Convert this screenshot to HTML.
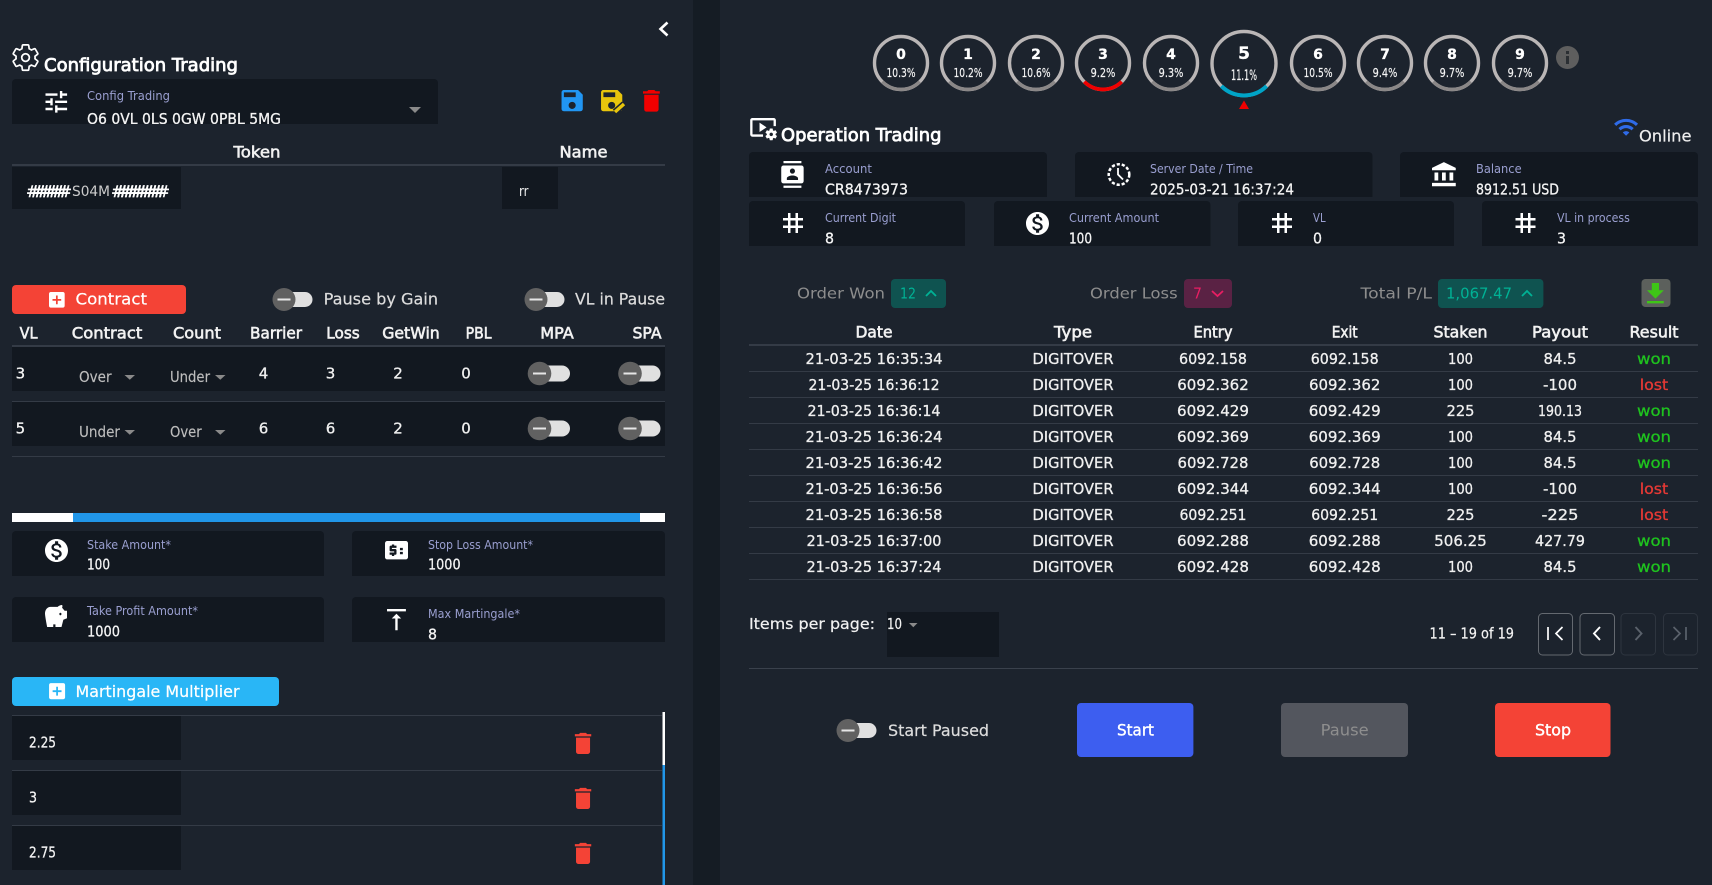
<!DOCTYPE html>
<html lang="en"><head><meta charset="utf-8"><title>Trading</title>
<style>
html,body{margin:0;padding:0;background:#1c232d;overflow:hidden}
svg{display:block}
text{font-family:"DejaVu Sans","Liberation Sans",sans-serif;fill:#e8e8e8;font-size:14px}
.h{font-size:18px;fill:#fff;stroke:#fff;stroke-width:.8}
.th{font-size:16px;fill:#f2f2f2;stroke:#f2f2f2;stroke-width:.6;text-anchor:middle}
.l{font-size:12px;fill:#9a9fd0}
.v{font-size:15px;fill:#f4f4f4;stroke:#f4f4f4;stroke-width:.3}
.s{font-size:15px;fill:#bdbdbd;stroke:#bdbdbd;stroke-width:.15}
.c{font-size:15px;fill:#f0f0f0;stroke:#f0f0f0;stroke-width:.3;text-anchor:middle}
.g{fill:#1fc21f;stroke:#1fc21f}.r{fill:#e53935;stroke:#e53935}
.n{font-size:14px;font-weight:bold;fill:#fff;stroke:#fff;stroke-width:.3;text-anchor:middle}
.p{font-size:12.5px;fill:#f4f4f4;stroke:#f4f4f4;stroke-width:.2;text-anchor:middle}
.o{font-size:15px;fill:#8d8d8d}
.b{font-size:16px;fill:#fff;text-anchor:middle;stroke:#fff;stroke-width:.4}
.t{font-size:16px;fill:#ddd;stroke:#ddd;stroke-width:.2}
.w{fill:#fff}
</style></head><body>
<svg xmlns="http://www.w3.org/2000/svg" width="1712" height="885" viewBox="0 0 1712 885">
<defs>
<g id="tog"><rect x="-8" y="-7.5" width="36.5" height="15" rx="7.5" fill="#e0e0e0"/><circle r="11.5" fill="#616161"/><rect x="-6.5" y="-1" width="13" height="2" fill="#e6e6e6"/></g>
<g id="tog2"><rect x="-8" y="-8" width="38.5" height="16" rx="8" fill="#e0e0e0"/><circle r="11.8" fill="#616161"/><rect x="-6.5" y="-1" width="13" height="2" fill="#e6e6e6"/></g>
<g id="ring"><circle r="26.5" fill="none" stroke="#bab6b6" stroke-width="3.4"/><path d="M-18.7 18.7A26.5 26.5 0 0 0 18.7 18.7" fill="none" stroke="#8a8787" stroke-width="3.4"/></g>
<path id="del" d="M6 19c0 1.1.9 2 2 2h8c1.1 0 2-.9 2-2V7H6v12zM19 4h-3.5l-1-1h-5l-1 1H5v2h14V4z"/>
<path id="tag" d="M20 10V8h-4V4h-2v4h-4V4H8v4H4v2h4v4H4v2h4v4h2v-4h4v4h2v-4h4v-2h-4v-4h4zm-6 4h-4v-4h4v4z"/>
<path id="add" d="M19 3H5c-1.11 0-2 .9-2 2v14c0 1.1.89 2 2 2h14c1.1 0 2-.9 2-2V5c0-1.1-.9-2-2-2zm-2 10h-4v4h-2v-4H7v-2h4V7h2v4h4v2z"/>
<path id="mon" d="M12 2C6.48 2 2 6.48 2 12s4.48 10 10 10 10-4.48 10-10S17.52 2 12 2zm1.41 16.09V20h-2.67v-1.93c-1.71-.36-3.16-1.46-3.27-3.4h1.96c.1 1.05.82 1.87 2.65 1.87 1.96 0 2.4-.98 2.4-1.59 0-.83-.44-1.61-2.67-2.14-2.48-.6-4.18-1.62-4.18-3.67 0-1.72 1.39-2.84 3.11-3.21V4h2.67v1.95c1.86.45 2.79 1.86 2.85 3.39H14.3c-.05-1.11-.64-1.87-2.22-1.87-1.5 0-2.4.68-2.4 1.64 0 .84.65 1.39 2.67 1.91s4.18 1.39 4.18 3.91c-.01 1.83-1.38 2.83-3.12 3.16z"/>
<path id="sav" d="M17 3H5c-1.11 0-2 .9-2 2v14c0 1.1.89 2 2 2h14c1.1 0 2-.9 2-2V7l-4-4zm-5 16c-1.66 0-3-1.34-3-3s1.34-3 3-3 3 1.34 3 3-1.34 3-3 3zm3-10H5V5h10v4z" fill-rule="evenodd"/>
</defs>

<rect width="1712" height="885" fill="#1c232d"/>
<rect x="693" width="27" height="885" fill="#151c24"/>

<!-- chevron -->
<path d="M667.5 22.5l-7 6.500 7 6.500" fill="none" stroke="#fff" stroke-width="2.600"/>

<!-- config header -->
<g transform="translate(10.3 42.300) scale(1.27)" fill="none" stroke="#fff" stroke-width="1.350"><path d="M19.43 12.98c.04-.32.07-.64.07-.98 0-.34-.03-.66-.07-.98l2.11-1.65c.19-.15.24-.42.12-.64l-2-3.46c-.09-.16-.26-.25-.44-.25-.06 0-.12.01-.17.03l-2.49 1c-.52-.4-1.08-.73-1.69-.98l-.38-2.65C14.46 2.18 14.25 2 14 2h-4c-.25 0-.46.18-.49.42l-.38 2.65c-.61.25-1.17.59-1.69.98l-2.49-1c-.06-.02-.12-.03-.18-.03-.17 0-.34.09-.43.25l-2 3.46c-.13.22-.07.49.12.64l2.11 1.65c-.04.32-.07.65-.07.98 0 .33.03.66.07.98l-2.11 1.65c-.19.15-.24.42-.12.64l2 3.46c.09.16.26.25.44.25.06 0 .12-.01.17-.03l2.49-1c.52.4 1.08.73 1.69.98l.38 2.65c.03.24.24.42.49.42h4c.25 0 .46-.18.49-.42l.38-2.65c.61-.25 1.17-.59 1.69-.98l2.49 1c.06.02.12.03.18.03.17 0 .34-.09.43-.25l2-3.46c.12-.22.07-.49-.12-.64l-2.11-1.65z"/><circle cx="12" cy="12" r="3"/></g>
<text class="h" x="44" y="71" textLength="194" lengthAdjust="spacingAndGlyphs">Configuration Trading</text>

<!-- config select -->
<path d="M12 83a4 4 0 0 1 4-4h418a4 4 0 0 1 4 4v41H12z" fill="#121820"/>
<path class="w" transform="translate(41.9 87.4) scale(1.2)" d="M3 17v2h6v-2H3zM3 5v2h10V5H3zm10 16v-2h8v-2h-8v-2h-2v6h2zM7 9v2H3v2h4v2h2V9H7zm14 4v-2H11v2h10zm-6-4h2V7h4V5h-4V3h-2v6z"/>
<text class="l" x="87" y="100" textLength="83" lengthAdjust="spacingAndGlyphs">Config Trading</text>
<text class="v" x="87" y="124" textLength="194" lengthAdjust="spacingAndGlyphs">O6 0VL 0LS 0GW 0PBL 5MG</text>
<rect x="12" y="124" width="426" height="5" fill="#1c232d"/>
<path d="M409 107h12l-6 6z" fill="#8a8a8a"/>

<use href="#sav" fill="#2196f3" transform="translate(558 86.5) scale(1.18)"/>
<use href="#sav" fill="#e8c50c" transform="translate(597.5 86.5) scale(1.18)"/>
<path d="M615 112l9-8" stroke="#1c232d" stroke-width="6.5"/>
<path d="M615 112l9-8" stroke="#e8c50c" stroke-width="3.4"/>
<use href="#del" fill="#f20000" transform="translate(637 86.4) scale(1.2)"/>

<!-- token -->
<text class="th" x="257" y="157.5" textLength="47" lengthAdjust="spacingAndGlyphs">Token</text>
<text class="th" x="583.5" y="157.5" textLength="48" lengthAdjust="spacingAndGlyphs">Name</text>
<rect x="12" y="164" width="653" height="2" fill="#343b46"/>
<rect x="12" y="167" width="169" height="42" fill="#121820"/>
<rect x="502" y="167" width="56" height="42" fill="#121820"/>
<text x="26" y="197" style="font-size:16px;fill:#fff;stroke:#fff;stroke-width:.4" textLength="46" lengthAdjust="spacing">##########</text>
<text x="72" y="196" style="font-size:14px;fill:#ccc" textLength="38" lengthAdjust="spacingAndGlyphs">S04M</text>
<text x="111" y="197" style="font-size:16px;fill:#fff;stroke:#fff;stroke-width:.4" textLength="59" lengthAdjust="spacing">#############</text>
<text x="519" y="196" style="font-size:14px;fill:#eee" textLength="9.5" lengthAdjust="spacingAndGlyphs">rr</text>

<!-- contract row -->
<rect x="12" y="285" width="174" height="29" rx="4" fill="#f44336"/>
<use href="#add" fill="#fff" transform="translate(46.4 289.4) scale(.87)"/>
<text class="t" x="75.5" y="304.5" textLength="71.5" lengthAdjust="spacingAndGlyphs" style="fill:#fff;stroke:#fff">Contract</text>
<use href="#tog" x="284" y="299.5"/>
<text class="t" x="323.6" y="304.5" textLength="114.5" lengthAdjust="spacingAndGlyphs">Pause by Gain</text>
<use href="#tog" x="536" y="299.5"/>
<text class="t" x="575" y="304.5" textLength="90" lengthAdjust="spacingAndGlyphs">VL in Pause</text>

<!-- left table -->
<g>
<text class="th" x="28.6" y="338.5" textLength="18" lengthAdjust="spacingAndGlyphs">VL</text>
<text class="th" x="107" y="338.5" textLength="70.5" lengthAdjust="spacingAndGlyphs">Contract</text>
<text class="th" x="197" y="338.5" textLength="48" lengthAdjust="spacingAndGlyphs">Count</text>
<text class="th" x="276" y="338.5" textLength="52" lengthAdjust="spacingAndGlyphs">Barrier</text>
<text class="th" x="343" y="338.5" textLength="33.5" lengthAdjust="spacingAndGlyphs">Loss</text>
<text class="th" x="411" y="338.5" textLength="57.6" lengthAdjust="spacingAndGlyphs">GetWin</text>
<text class="th" x="478.6" y="338.5" textLength="26" lengthAdjust="spacingAndGlyphs">PBL</text>
<text class="th" x="557" y="338.5" textLength="33.5" lengthAdjust="spacingAndGlyphs">MPA</text>
<text class="th" x="647" y="338.5" textLength="29" lengthAdjust="spacingAndGlyphs">SPA</text>
</g>
<rect x="12" y="345" width="653" height="2" fill="#343b46"/>
<rect x="12" y="347" width="653" height="44" fill="#121820"/>
<rect x="12" y="401" width="653" height="1" fill="#343b46"/>
<rect x="12" y="402" width="653" height="44" fill="#121820"/>
<rect x="12" y="456" width="653" height="1" fill="#343b46"/>

<text class="v" x="15.6" y="378.500">3</text>
<text class="s" x="79" y="382" textLength="32.6" lengthAdjust="spacingAndGlyphs">Over</text>
<path d="M124.5 375h10.5l-5.2 4.8z" fill="#8a8a8a"/>
<text class="s" x="170" y="382" textLength="40" lengthAdjust="spacingAndGlyphs">Under</text>
<path d="M215 375h10.5l-5.2 4.8z" fill="#8a8a8a"/>
<text class="c" x="263.500" y="378.500">4</text><text class="c" x="330.500" y="378.500">3</text><text class="c" x="398" y="378.500">2</text><text class="c" x="466" y="378.500">0</text>
<use href="#tog2" x="539.500" y="373.500"/><use href="#tog2" x="630" y="373.500"/>

<text class="v" x="15.6" y="433.500">5</text>
<text class="s" x="79" y="437" textLength="41" lengthAdjust="spacingAndGlyphs">Under</text>
<path d="M124.5 430h10.5l-5.2 4.800z" fill="#8a8a8a"/>
<text class="s" x="170" y="437" textLength="31.7" lengthAdjust="spacingAndGlyphs">Over</text>
<path d="M215 430h10.500l-5.200 4.800z" fill="#8a8a8a"/>
<text class="c" x="263.500" y="433.500">6</text><text class="c" x="330.500" y="433.500">6</text><text class="c" x="398" y="433.500">2</text><text class="c" x="466" y="433.500">0</text>
<use href="#tog2" x="539.500" y="428.500"/><use href="#tog2" x="630" y="428.500"/>

<!-- h scrollbar -->
<rect x="12" y="513" width="653" height="9" fill="#fff"/>
<rect x="73" y="513" width="567" height="9" fill="#2196e8"/>

<!-- field boxes -->
<path d="M12 535a4 4 0 0 1 4-4h304a4 4 0 0 1 4 4v41H12z" fill="#121820"/>
<path d="M352 535a4 4 0 0 1 4-4h305a4 4 0 0 1 4 4v41H352z" fill="#121820"/>
<path d="M12 601a4 4 0 0 1 4-4h304a4 4 0 0 1 4 4v41H12z" fill="#121820"/>
<path d="M352 601a4 4 0 0 1 4-4h305a4 4 0 0 1 4 4v41H352z" fill="#121820"/>
<use href="#mon" fill="#fff" transform="translate(42.700 536.700) scale(1.15)"/>
<text class="l" x="87" y="549" textLength="84" lengthAdjust="spacingAndGlyphs">Stake Amount*</text>
<text class="v" x="87" y="569.500" textLength="23" lengthAdjust="spacingAndGlyphs">100</text>
<path class="w" transform="translate(382.700 536.400) scale(1.15)" d="M20 4H4c-1.110 0-1.990.890-1.990 2L2 18c0 1.110.890 2 2 2h16c1.110 0 2-.890 2-2V6c0-1.110-.890-2-2-2zM12 10H8v1h3c.550 0 1 .450 1 1v3c0 .550-.450 1-1 1h-1v1H8v-1H6v-2h4v-1H7c-.550 0-1-.450-1-1V9c0-.550.450-1 1-1h1V7h2v1h2v2zm3 0h2.500v2H15zm0 3.500h2.500v2H15z" fill-rule="evenodd"/>
<text class="l" x="428" y="549" textLength="105" lengthAdjust="spacingAndGlyphs">Stop Loss Amount*</text>
<text class="v" x="428" y="569.500" textLength="32.6" lengthAdjust="spacingAndGlyphs">1000</text>
<path class="w" transform="translate(42.800 601) scale(1.1 1.3)" d="M19.830 7.500l-2.270-2.270c.070-.420.180-.810.320-1.150.110-.260.040-.560-.150-.750-.190-.180-.460-.270-.730-.230-1.260.200-2.490.650-3.500 1.400H7C4.240 4.500 2 6.740 2 9.500 2 11.830 4 20 4 20h5.500v-2h2v2H17l1.680-5.590 3.320-1.150V7.500h-2.170zM16 11c-.550 0-1-.450-1-1s.450-1 1-1 1 .450 1 1-.450 1-1 1z" fill-rule="evenodd"/>
<text class="l" x="87" y="615" textLength="111" lengthAdjust="spacingAndGlyphs">Take Profit Amount*</text>
<text class="v" x="87" y="636.500" textLength="33" lengthAdjust="spacingAndGlyphs">1000</text>
<path class="w" transform="translate(382.300 605.500) scale(1.18)" d="M8 11h3v10h2V11h3l-4-4-4 4zM4 3v2h16V3H4z"/>
<text class="l" x="428" y="618" textLength="92" lengthAdjust="spacingAndGlyphs">Max Martingale*</text>
<text class="v" x="428" y="639.500" textLength="9" lengthAdjust="spacingAndGlyphs">8</text>

<!-- martingale -->
<rect x="12" y="677" width="267" height="29" rx="4" fill="#29b6f6"/>
<use href="#add" fill="#fff" transform="translate(46.400 680.500) scale(.89)"/>
<text class="t" x="75.500" y="697" textLength="164" lengthAdjust="spacingAndGlyphs" style="fill:#fff;stroke:#fff">Martingale Multiplier</text>
<rect x="12" y="715" width="650" height="1" fill="#343b46"/>
<rect x="12" y="770" width="650" height="1" fill="#343b46"/>
<rect x="12" y="825" width="650" height="1" fill="#343b46"/>
<rect x="12" y="716" width="169" height="44" fill="#121820"/>
<rect x="12" y="771" width="169" height="44" fill="#121820"/>
<rect x="12" y="826" width="169" height="44" fill="#121820"/>
<text class="v" x="29" y="747.500" textLength="27" lengthAdjust="spacingAndGlyphs">2.25</text>
<text class="v" x="29" y="802.500" textLength="8" lengthAdjust="spacingAndGlyphs">3</text>
<text class="v" x="29" y="857.500" textLength="27" lengthAdjust="spacingAndGlyphs">2.75</text>
<use href="#del" fill="#f44336" transform="translate(569 729.400) scale(1.17)"/>
<use href="#del" fill="#f44336" transform="translate(569 784.400) scale(1.17)"/>
<use href="#del" fill="#f44336" transform="translate(569 839.400) scale(1.17)"/>
<rect x="662.500" y="712" width="2.500" height="53" fill="#fff"/>
<rect x="662.500" y="765" width="2.500" height="120" fill="#2196e8"/>

<!-- rings -->
<g transform="translate(901 63)"><use href="#ring"/></g>
<g transform="translate(968 63)"><use href="#ring"/></g>
<g transform="translate(1036 63)"><use href="#ring"/></g>
<g transform="translate(1103 63)"><use href="#ring"/><path d="M-18.700 18.700A26.500 26.500 0 0 0 18.700 18.700" fill="none" stroke="#f00000" stroke-width="3.800"/></g>
<g transform="translate(1171 63)"><use href="#ring"/></g>
<g transform="translate(1244 63.500)"><circle r="32" fill="none" stroke="#bab6b6" stroke-width="3.400"/><path d="M-22.600 22.600A32 32 0 0 0 22.600 22.600" fill="none" stroke="#00a4c7" stroke-width="4"/></g>
<g transform="translate(1318 63)"><use href="#ring"/></g>
<g transform="translate(1385 63)"><use href="#ring"/></g>
<g transform="translate(1452 63)"><use href="#ring"/></g>
<g transform="translate(1520 63)"><use href="#ring"/></g>
<text class="n" x="901" y="59">0</text><text class="p" x="901" y="77" textLength="29" lengthAdjust="spacingAndGlyphs">10.3%</text>
<text class="n" x="968" y="59">1</text><text class="p" x="968" y="77" textLength="29" lengthAdjust="spacingAndGlyphs">10.2%</text>
<text class="n" x="1036" y="59">2</text><text class="p" x="1036" y="77" textLength="29" lengthAdjust="spacingAndGlyphs">10.6%</text>
<text class="n" x="1103" y="59">3</text><text class="p" x="1103" y="77" textLength="24.700" lengthAdjust="spacingAndGlyphs">9.2%</text>
<text class="n" x="1171" y="59">4</text><text class="p" x="1171" y="77" textLength="24.700" lengthAdjust="spacingAndGlyphs">9.3%</text>
<text class="n" x="1244" y="59" style="font-size:17px">5</text><text class="p" x="1244" y="80" style="font-size:14px" textLength="26" lengthAdjust="spacingAndGlyphs">11.1%</text>
<text class="n" x="1318" y="59">6</text><text class="p" x="1318" y="77" textLength="29" lengthAdjust="spacingAndGlyphs">10.5%</text>
<text class="n" x="1385" y="59">7</text><text class="p" x="1385" y="77" textLength="24.700" lengthAdjust="spacingAndGlyphs">9.4%</text>
<text class="n" x="1452" y="59">8</text><text class="p" x="1452" y="77" textLength="24.700" lengthAdjust="spacingAndGlyphs">9.7%</text>
<text class="n" x="1520" y="59">9</text><text class="p" x="1520" y="77" textLength="24.700" lengthAdjust="spacingAndGlyphs">9.7%</text>
<circle cx="1567.500" cy="57.500" r="11.500" fill="#5e5e5e"/>
<rect x="1566" y="56" width="3" height="8" fill="#2b2f33"/><rect x="1566" y="51" width="3" height="3" fill="#2b2f33"/>
<path d="M1244 100.500l5 8.500h-10z" fill="#f00000"/>

<!-- operation header -->
<path class="w" transform="translate(749 113.300) scale(1.17)" d="M3 6h18v5h2V6c0-1.100-.900-2-2-2H3c-1.100 0-2 .900-2 2v12c0 1.100.900 2 2 2h9v-2H3V6zM15 12l-6-4v8zM22.710 18.430c.030-.290.040-.580.010-.860l1.070-.850c.100-.080.120-.210.060-.320l-1.030-1.790c-.060-.110-.190-.150-.310-.110l-1.280.500c-.230-.170-.480-.310-.750-.420l-.200-1.360c-.020-.130-.120-.220-.250-.220h-2.070c-.120 0-.230.090-.250.210l-.200 1.360c-.260.110-.510.260-.740.420l-1.280-.500c-.120-.050-.250 0-.310.110l-1.030 1.790c-.060.110-.040.240.060.320l1.070.860c-.030.290-.040.580-.010.860l-1.070.850c-.100.080-.120.210-.060.320l1.030 1.790c.060.110.190.150.310.110l1.270-.500c.230.170.480.310.750.420l.200 1.360c.020.120.120.210.250.210h2.070c.120 0 .230-.090.250-.210l.200-1.360c.260-.110.510-.260.740-.420l1.280.500c.120.050.250 0 .310-.110l1.030-1.790c.060-.110.040-.240-.060-.320l-1.060-.850zM19 19.500c-.830 0-1.500-.670-1.500-1.500s.670-1.500 1.500-1.500 1.500.670 1.500 1.500-.670 1.500-1.500 1.500z"/>
<text class="h" x="781" y="141" textLength="160.500" lengthAdjust="spacingAndGlyphs">Operation Trading</text>
<path fill="#2f6be8" transform="translate(1613 114) scale(1.09)" d="M1 9l2 2c4.970-4.970 13.030-4.970 18 0l2-2C16.930 2.930 7.080 2.930 1 9zm8 8l3 3 3-3c-1.650-1.660-4.340-1.660-6 0zm-4-4l2 2c2.760-2.760 7.240-2.760 10 0l2-2C15.140 9.140 8.870 9.140 5 13z"/>
<text x="1639" y="141.500" style="font-size:16px;fill:#eee;stroke:#eee;stroke-width:.2" textLength="52.500" lengthAdjust="spacingAndGlyphs">Online</text>

<!-- info row 1 -->
<path d="M749 156a4 4 0 0 1 4-4h290a4 4 0 0 1 4 4v41H749z" fill="#121820"/>
<path d="M1075 156a4 4 0 0 1 4-4h289.500a4 4 0 0 1 4 4v41H1075z" fill="#121820"/>
<path d="M1400 156a4 4 0 0 1 4-4h290a4 4 0 0 1 4 4v41H1400z" fill="#121820"/>
<path class="w" transform="translate(779 161) scale(1.12)" d="M20 0H4v2h16V0zM4 24h16v-2H4v2zM20 4H4c-1.100 0-2 .900-2 2v12c0 1.100.900 2 2 2h16c1.100 0 2-.900 2-2V6c0-1.100-.900-2-2-2zm-8 2.750c1.240 0 2.250 1.010 2.250 2.250s-1.010 2.250-2.250 2.250S9.750 10.240 9.750 9 10.760 6.750 12 6.750zM17 17H7v-1.500c0-1.670 3.330-2.500 5-2.500s5 .830 5 2.500V17z"/>
<text class="l" x="825" y="173" textLength="47" lengthAdjust="spacingAndGlyphs">Account</text>
<text class="v" x="825" y="194.500" textLength="83" lengthAdjust="spacingAndGlyphs">CR8473973</text>
<circle cx="1119" cy="174.500" r="10.300" fill="none" stroke="#fff" stroke-width="2.500" stroke-dasharray="3.200 1.900"/>
<path d="M1118 168v6.500l5 5" fill="none" stroke="#fff" stroke-width="1.800"/>
<text class="l" x="1150" y="173" textLength="103" lengthAdjust="spacingAndGlyphs">Server Date / Time</text>
<text class="v" x="1150" y="194.500" textLength="144" lengthAdjust="spacingAndGlyphs">2025-03-21 16:37:24</text>
<path class="w" transform="translate(1429.500 161) scale(1.25 1.15)" d="M4 10v7h3v-7H4zm6 0v7h3v-7h-3zM2 22h19v-3H2v3zm14-12v7h3v-7h-3zm-4.500-9L2 6v2h19V6l-9.500-5z"/>
<text class="l" x="1476" y="173" textLength="45.600" lengthAdjust="spacingAndGlyphs">Balance</text>
<text class="v" x="1476" y="194.500" textLength="83" lengthAdjust="spacingAndGlyphs">8912.51 USD</text>

<!-- info row 2 -->
<path d="M749 205a4 4 0 0 1 4-4h208a4 4 0 0 1 4 4v41H749z" fill="#121820"/>
<path d="M994 205a4 4 0 0 1 4-4h208.500a4 4 0 0 1 4 4v41H994z" fill="#121820"/>
<path d="M1238 205a4 4 0 0 1 4-4h208a4 4 0 0 1 4 4v41H1238z" fill="#121820"/>
<path d="M1482 205a4 4 0 0 1 4-4h208a4 4 0 0 1 4 4v41H1482z" fill="#121820"/>
<use href="#tag" fill="#fff" transform="translate(778 208) scale(1.25)"/>
<text class="l" x="825" y="222" textLength="71" lengthAdjust="spacingAndGlyphs">Current Digit</text>
<text class="v" x="825" y="243.500" textLength="9" lengthAdjust="spacingAndGlyphs">8</text>
<use href="#mon" fill="#fff" transform="translate(1023.700 209.700) scale(1.15)"/>
<text class="l" x="1069" y="222" textLength="90" lengthAdjust="spacingAndGlyphs">Current Amount</text>
<text class="v" x="1069" y="243.500" textLength="23" lengthAdjust="spacingAndGlyphs">100</text>
<use href="#tag" fill="#fff" transform="translate(1267 208) scale(1.25)"/>
<text class="l" x="1313" y="222" textLength="12.600" lengthAdjust="spacingAndGlyphs">VL</text>
<text class="v" x="1313" y="243.500" textLength="9" lengthAdjust="spacingAndGlyphs">0</text>
<use href="#tag" fill="#fff" transform="translate(1510.500 208) scale(1.25)"/>
<text class="l" x="1557" y="222" textLength="72.800" lengthAdjust="spacingAndGlyphs">VL in process</text>
<text class="v" x="1557" y="243.500" textLength="9" lengthAdjust="spacingAndGlyphs">3</text>

<!-- summary -->
<text class="o" x="797" y="298.500" textLength="88" lengthAdjust="spacingAndGlyphs">Order Won</text>
<rect x="891" y="279" width="55" height="29" rx="4" fill="#0f5350"/>
<text x="900" y="298.500" style="font-size:15px;fill:#00b295" textLength="16" lengthAdjust="spacingAndGlyphs">12</text>
<path d="M926 296l5-5 5 5" fill="none" stroke="#00b295" stroke-width="1.800"/>
<text class="o" x="1090" y="298.500" textLength="87.600" lengthAdjust="spacingAndGlyphs">Order Loss</text>
<rect x="1184" y="279" width="48" height="29" rx="4" fill="#5a2244"/>
<text x="1193" y="298.500" style="font-size:15px;fill:#e91e63" textLength="9" lengthAdjust="spacingAndGlyphs">7</text>
<path d="M1212 291l5.500 5 5.500-5" fill="none" stroke="#e91e63" stroke-width="1.800"/>
<text class="o" x="1360.500" y="298.500" textLength="71.500" lengthAdjust="spacingAndGlyphs">Total P/L</text>
<rect x="1438" y="279" width="105.400" height="29" rx="4" fill="#0f5350"/>
<text x="1446" y="298.500" style="font-size:15px;fill:#00b295" textLength="66" lengthAdjust="spacingAndGlyphs">1,067.47</text>
<path d="M1522 296l5-5 5 5" fill="none" stroke="#00b295" stroke-width="1.800"/>
<rect x="1641.500" y="279" width="29" height="28" rx="4" fill="#5c605c"/>
<path fill="#3ec516" transform="translate(1641 279.400) scale(1.2)" d="M19 9h-4V3H9v6H5l7 7 7-7zM5 18v2h14v-2H5z"/>

<!-- right table header -->
<text class="th" x="874" y="337.500" textLength="37" lengthAdjust="spacingAndGlyphs">Date</text>
<text class="th" x="1073" y="337.500" textLength="38" lengthAdjust="spacingAndGlyphs">Type</text>
<text class="th" x="1213" y="337.500" textLength="39" lengthAdjust="spacingAndGlyphs">Entry</text>
<text class="th" x="1344.700" y="337.500" textLength="26" lengthAdjust="spacingAndGlyphs">Exit</text>
<text class="th" x="1460.500" y="337.500" textLength="54" lengthAdjust="spacingAndGlyphs">Staken</text>
<text class="th" x="1560" y="337.500" textLength="56" lengthAdjust="spacingAndGlyphs">Payout</text>
<text class="th" x="1654" y="337.500" textLength="49" lengthAdjust="spacingAndGlyphs">Result</text>
<rect x="749" y="344" width="949" height="2" fill="#343b46"/>
<g fill="#343b46"><rect x="749" y="371" width="949" height="1"/><rect x="749" y="397" width="949" height="1"/><rect x="749" y="423" width="949" height="1"/><rect x="749" y="449" width="949" height="1"/><rect x="749" y="475" width="949" height="1"/><rect x="749" y="501" width="949" height="1"/><rect x="749" y="527" width="949" height="1"/><rect x="749" y="553" width="949" height="1"/><rect x="749" y="579" width="949" height="1"/></g>

<!-- rows -->
<text class="c" x="874" y="364" textLength="137" lengthAdjust="spacingAndGlyphs">21-03-25 16:35:34</text><text class="c" x="1073" y="364" textLength="81" lengthAdjust="spacingAndGlyphs">DIGITOVER</text><text class="c" x="1213" y="364" textLength="68" lengthAdjust="spacingAndGlyphs">6092.158</text><text class="c" x="1344.700" y="364" textLength="68" lengthAdjust="spacingAndGlyphs">6092.158</text><text class="c" x="1460.500" y="364" textLength="25" lengthAdjust="spacingAndGlyphs">100</text><text class="c" x="1560" y="364" textLength="33" lengthAdjust="spacingAndGlyphs">84.5</text><text class="c g" x="1654" y="364" textLength="34" lengthAdjust="spacingAndGlyphs">won</text>
<text class="c" x="874" y="390" textLength="131" lengthAdjust="spacingAndGlyphs">21-03-25 16:36:12</text><text class="c" x="1073" y="390" textLength="81" lengthAdjust="spacingAndGlyphs">DIGITOVER</text><text class="c" x="1213" y="390" textLength="71.500" lengthAdjust="spacingAndGlyphs">6092.362</text><text class="c" x="1344.700" y="390" textLength="71.500" lengthAdjust="spacingAndGlyphs">6092.362</text><text class="c" x="1460.500" y="390" textLength="25" lengthAdjust="spacingAndGlyphs">100</text><text class="c" x="1560" y="390" textLength="34" lengthAdjust="spacingAndGlyphs">-100</text><text class="c r" x="1654" y="390" textLength="28.500" lengthAdjust="spacingAndGlyphs">lost</text>
<text class="c" x="874" y="416" textLength="133" lengthAdjust="spacingAndGlyphs">21-03-25 16:36:14</text><text class="c" x="1073" y="416" textLength="81" lengthAdjust="spacingAndGlyphs">DIGITOVER</text><text class="c" x="1213" y="416" textLength="72" lengthAdjust="spacingAndGlyphs">6092.429</text><text class="c" x="1344.700" y="416" textLength="72" lengthAdjust="spacingAndGlyphs">6092.429</text><text class="c" x="1460.500" y="416" textLength="28" lengthAdjust="spacingAndGlyphs">225</text><text class="c" x="1560" y="416" textLength="44" lengthAdjust="spacingAndGlyphs">190.13</text><text class="c g" x="1654" y="416" textLength="34" lengthAdjust="spacingAndGlyphs">won</text>
<text class="c" x="874" y="442" textLength="137" lengthAdjust="spacingAndGlyphs">21-03-25 16:36:24</text><text class="c" x="1073" y="442" textLength="81" lengthAdjust="spacingAndGlyphs">DIGITOVER</text><text class="c" x="1213" y="442" textLength="72" lengthAdjust="spacingAndGlyphs">6092.369</text><text class="c" x="1344.700" y="442" textLength="72" lengthAdjust="spacingAndGlyphs">6092.369</text><text class="c" x="1460.500" y="442" textLength="25" lengthAdjust="spacingAndGlyphs">100</text><text class="c" x="1560" y="442" textLength="33" lengthAdjust="spacingAndGlyphs">84.5</text><text class="c g" x="1654" y="442" textLength="34" lengthAdjust="spacingAndGlyphs">won</text>
<text class="c" x="874" y="468" textLength="137" lengthAdjust="spacingAndGlyphs">21-03-25 16:36:42</text><text class="c" x="1073" y="468" textLength="81" lengthAdjust="spacingAndGlyphs">DIGITOVER</text><text class="c" x="1213" y="468" textLength="71" lengthAdjust="spacingAndGlyphs">6092.728</text><text class="c" x="1344.700" y="468" textLength="71" lengthAdjust="spacingAndGlyphs">6092.728</text><text class="c" x="1460.500" y="468" textLength="25" lengthAdjust="spacingAndGlyphs">100</text><text class="c" x="1560" y="468" textLength="33" lengthAdjust="spacingAndGlyphs">84.5</text><text class="c g" x="1654" y="468" textLength="34" lengthAdjust="spacingAndGlyphs">won</text>
<text class="c" x="874" y="494" textLength="137" lengthAdjust="spacingAndGlyphs">21-03-25 16:36:56</text><text class="c" x="1073" y="494" textLength="81" lengthAdjust="spacingAndGlyphs">DIGITOVER</text><text class="c" x="1213" y="494" textLength="72" lengthAdjust="spacingAndGlyphs">6092.344</text><text class="c" x="1344.700" y="494" textLength="72" lengthAdjust="spacingAndGlyphs">6092.344</text><text class="c" x="1460.500" y="494" textLength="25" lengthAdjust="spacingAndGlyphs">100</text><text class="c" x="1560" y="494" textLength="34" lengthAdjust="spacingAndGlyphs">-100</text><text class="c r" x="1654" y="494" textLength="28.500" lengthAdjust="spacingAndGlyphs">lost</text>
<text class="c" x="874" y="520" textLength="137" lengthAdjust="spacingAndGlyphs">21-03-25 16:36:58</text><text class="c" x="1073" y="520" textLength="81" lengthAdjust="spacingAndGlyphs">DIGITOVER</text><text class="c" x="1213" y="520" textLength="67" lengthAdjust="spacingAndGlyphs">6092.251</text><text class="c" x="1344.700" y="520" textLength="67" lengthAdjust="spacingAndGlyphs">6092.251</text><text class="c" x="1460.500" y="520" textLength="28" lengthAdjust="spacingAndGlyphs">225</text><text class="c" x="1560" y="520" textLength="37" lengthAdjust="spacingAndGlyphs">-225</text><text class="c r" x="1654" y="520" textLength="28.500" lengthAdjust="spacingAndGlyphs">lost</text>
<text class="c" x="874" y="546" textLength="135" lengthAdjust="spacingAndGlyphs">21-03-25 16:37:00</text><text class="c" x="1073" y="546" textLength="81" lengthAdjust="spacingAndGlyphs">DIGITOVER</text><text class="c" x="1213" y="546" textLength="72" lengthAdjust="spacingAndGlyphs">6092.288</text><text class="c" x="1344.700" y="546" textLength="72" lengthAdjust="spacingAndGlyphs">6092.288</text><text class="c" x="1460.500" y="546" textLength="52.500" lengthAdjust="spacingAndGlyphs">506.25</text><text class="c" x="1560" y="546" textLength="50" lengthAdjust="spacingAndGlyphs">427.79</text><text class="c g" x="1654" y="546" textLength="34" lengthAdjust="spacingAndGlyphs">won</text>
<text class="c" x="874" y="572" textLength="135" lengthAdjust="spacingAndGlyphs">21-03-25 16:37:24</text><text class="c" x="1073" y="572" textLength="81" lengthAdjust="spacingAndGlyphs">DIGITOVER</text><text class="c" x="1213" y="572" textLength="72" lengthAdjust="spacingAndGlyphs">6092.428</text><text class="c" x="1344.700" y="572" textLength="72" lengthAdjust="spacingAndGlyphs">6092.428</text><text class="c" x="1460.500" y="572" textLength="25" lengthAdjust="spacingAndGlyphs">100</text><text class="c" x="1560" y="572" textLength="33" lengthAdjust="spacingAndGlyphs">84.5</text><text class="c g" x="1654" y="572" textLength="34" lengthAdjust="spacingAndGlyphs">won</text>

<!-- pagination -->
<text x="749" y="629" style="font-size:15px;fill:#f2f2f2;stroke:#f2f2f2;stroke-width:.2" textLength="126" lengthAdjust="spacingAndGlyphs">Items per page:</text>
<rect x="887" y="612" width="112" height="45" fill="#121820"/>
<text x="887" y="629" style="font-size:15px;fill:#f2f2f2;stroke:#f2f2f2;stroke-width:.2" textLength="15" lengthAdjust="spacingAndGlyphs">10</text>
<path d="M909 623h8.500l-4.200 4.200z" fill="#8a8a8a"/>
<text x="1429.500" y="638.500" style="font-size:15px;fill:#f2f2f2;stroke:#f2f2f2;stroke-width:.2" textLength="84.500" lengthAdjust="spacingAndGlyphs">11 – 19 of 19</text>
<rect x="1538.500" y="613.500" width="34" height="41.500" rx="4" fill="none" stroke="#646970"/>
<rect x="1580" y="613.500" width="34.500" height="41.500" rx="4" fill="none" stroke="#646970"/>
<rect x="1621" y="613.500" width="34.500" height="41.500" rx="4" fill="none" stroke="#2e353f"/>
<rect x="1663.500" y="613.500" width="34" height="41.500" rx="4" fill="none" stroke="#2e353f"/>
<path d="M1548 627v13M1562.500 627l-6.500 6.500 6.500 6.500" fill="none" stroke="#fff" stroke-width="1.700"/>
<path d="M1600 627l-6 6.500 6 6.500" fill="none" stroke="#fff" stroke-width="1.900"/>
<path d="M1635.500 627l6 6.500-6 6.500" fill="none" stroke="#5a616b" stroke-width="1.900"/>
<path d="M1673.500 627l6.500 6.500-6.500 6.500M1686 627v13" fill="none" stroke="#5a616b" stroke-width="1.700"/>
<rect x="749" y="668" width="949" height="1" fill="#3a414c"/>

<!-- actions -->
<use href="#tog" x="848" y="730.500"/>
<text class="t" x="888" y="736" textLength="101" lengthAdjust="spacingAndGlyphs">Start Paused</text>
<rect x="1077" y="703" width="116.400" height="54" rx="4" fill="#3d5ef0"/>
<text class="b" x="1135.500" y="735.500" textLength="37" lengthAdjust="spacingAndGlyphs">Start</text>
<rect x="1281" y="703" width="127" height="54" rx="4" fill="#53565e"/>
<text class="b" x="1344.700" y="735.500" textLength="48" lengthAdjust="spacingAndGlyphs" style="fill:#8e8e8e;stroke:none">Pause</text>
<rect x="1495" y="703" width="115.500" height="54" rx="4" fill="#f44336"/>
<text class="b" x="1553" y="735.500" textLength="36" lengthAdjust="spacingAndGlyphs">Stop</text>
</svg>
</body></html>
